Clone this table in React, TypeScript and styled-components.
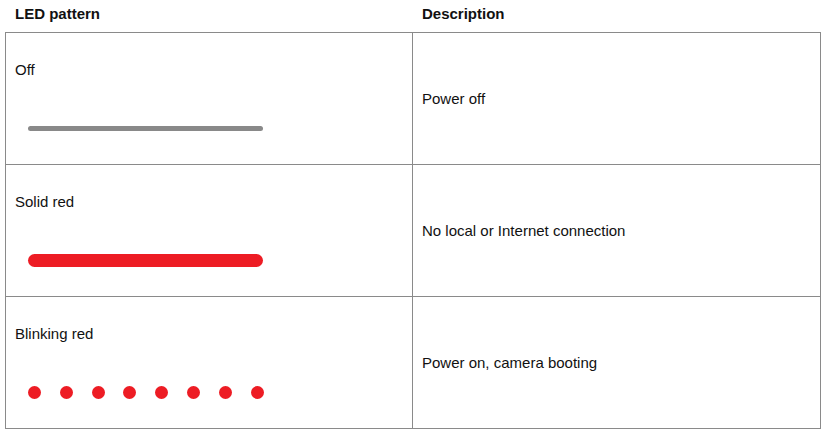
import styled, { createGlobalStyle } from 'styled-components';

const GlobalStyle = createGlobalStyle`
  body {
    margin: 0;
    background: #fff;
    font-family: "Liberation Sans", Arial, sans-serif;
    color: #111;
  }
`;

type Pattern = 'off' | 'solid' | 'blink';

const rows: { label: string; pattern: Pattern; description: string }[] = [
  { label: 'Off', pattern: 'off', description: 'Power off' },
  { label: 'Solid red', pattern: 'solid', description: 'No local or Internet connection' },
  { label: 'Blinking red', pattern: 'blink', description: 'Power on, camera booting' },
];

export default function App() {
  return (
    <>
      <GlobalStyle />
      <Page>
        <HeaderRow>
          <HeaderCell>LED pattern</HeaderCell>
          <HeaderCell>Description</HeaderCell>
        </HeaderRow>
        <Table>
          {rows.map((row, i) => (
            <Row key={row.label} last={i === rows.length - 1}>
              <PatternCell>
                <Label>{row.label}</Label>
                <Visual>
                  {row.pattern === 'off' && <Bar color="#898989" thickness={5} />}
                  {row.pattern === 'solid' && <Bar color="#ed1c24" thickness={13} />}
                  {row.pattern === 'blink' && (
                    <Dots>
                      {Array.from({ length: 8 }).map((_, d) => (
                        <Dot key={d} />
                      ))}
                    </Dots>
                  )}
                </Visual>
              </PatternCell>
              <DescriptionCell>{row.description}</DescriptionCell>
            </Row>
          ))}
        </Table>
      </Page>
    </>
  );
}

const Page = styled.div`
  width: 829px;
  height: 436px;
  padding-left: 5px;
  box-sizing: border-box;
`;

const HeaderRow = styled.div`
  display: grid;
  grid-template-columns: 407px 409px;
  height: 32px;
`;

const HeaderCell = styled.div`
  font-size: 15px;
  font-weight: bold;
  line-height: 17px;
  padding: 5px 0 0 10px;
`;

const Table = styled.div`
  width: 816px;
  box-sizing: border-box;
  border: 1px solid #8a8a8a;
`;

const Row = styled.div<{ last?: boolean }>`
  display: grid;
  grid-template-columns: 407px 407px;
  height: ${(p) => (p.last ? 131 : 132)}px;
  box-sizing: border-box;
  border-bottom: ${(p) => (p.last ? 'none' : '1px solid #8a8a8a')};
`;

const PatternCell = styled.div`
  display: flex;
  flex-direction: column;
  padding: 28px 0 0 9px;
  border-right: 1px solid #8a8a8a;
`;

const Label = styled.div`
  font-size: 15px;
  line-height: 17px;
`;

const Visual = styled.div`
  display: flex;
  align-items: center;
  height: 14px;
  margin-top: 43px;
  padding-left: 13px;
`;

const Bar = styled.div<{ color: string; thickness: number }>`
  width: 235px;
  height: ${(p) => p.thickness}px;
  border-radius: ${(p) => p.thickness / 2}px;
  background: ${(p) => p.color};
`;

const Dots = styled.div`
  display: flex;
  gap: 18.8px;
`;

const Dot = styled.span`
  width: 13px;
  height: 13px;
  border-radius: 50%;
  background: #ed1c24;
`;

const DescriptionCell = styled.div`
  display: flex;
  align-items: center;
  padding-left: 9px;
  font-size: 15px;
  line-height: 17px;
`;
